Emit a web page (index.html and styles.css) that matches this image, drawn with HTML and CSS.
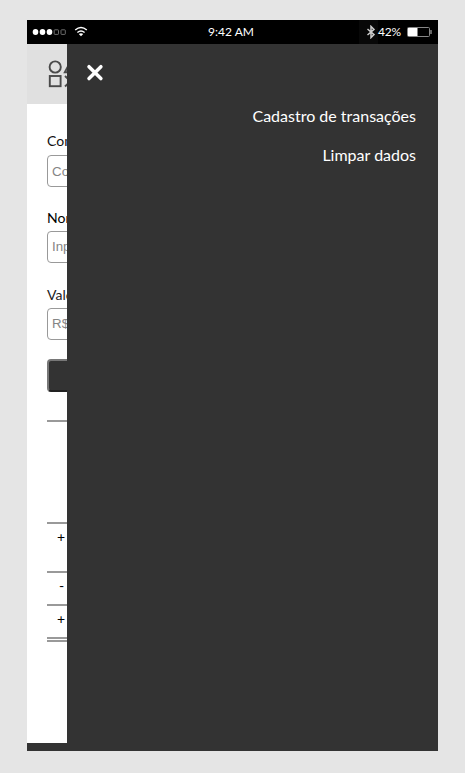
FILE: index.html
```html
<!DOCTYPE html>
<html lang="pt-BR">
<head>
<meta charset="utf-8">
<title>Cadastro de transações</title>
<link rel="stylesheet" href="styles.css">
</head>
<body>
<div class="phone">
  <div class="status">
    <div class="status-left">
      <svg class="signal" width="36" height="8" viewBox="0 0 36 8"><g fill="#fff"><ellipse cx="3.5" cy="4" rx="2.8" ry="3"/><ellipse cx="10.5" cy="4" rx="2.8" ry="3"/><ellipse cx="17.5" cy="4" rx="2.8" ry="3"/></g><g fill="none" stroke="#777" stroke-width=".9"><rect x="22.2" y="1.8" width="4.3" height="4.6" rx=".6"/><rect x="29" y="1.8" width="4.3" height="4.6" rx=".6"/></g></svg>
      <svg class="wifi" width="14" height="11" viewBox="0 0 14 11"><g fill="none" stroke="#fff" stroke-width="1.4"><path d="M1.2 4Q7-1.2 12.8 4"/><path d="M3.4 6.5Q7 3.3 10.6 6.5"/></g><path d="M4.8 8.1Q7 6.4 9.2 8.1L7 10.3Z" fill="#fff"/></svg>
    </div>
    <span class="clock">9:42 AM</span>
    <div class="status-right">
      <span class="bt"><svg width="10" height="14" viewBox="0 0 10 14"><path d="M1.5 4L8 9.6L5 12.6V1.4L8 4.4L1.5 10" fill="none" stroke="#ccc" stroke-width="1.5"/></svg></span>
      <span class="percent">42%</span>
      <svg class="battery" width="25" height="10" viewBox="0 0 25 10"><rect x=".5" y=".5" width="22" height="9" rx="1" fill="none" stroke="#888"/><rect x="1" y="1" width="9.500" height="8" fill="#fff"/><path d="M24 3v4" stroke="#aaa" stroke-width="1.2"/></svg>
    </div>
  </div>
  <div class="screen">
    <header class="header">
      <svg width="36" height="28" viewBox="0 0 36 28"><g fill="none" stroke="#4a4a4a" stroke-width="1.9"><circle cx="7.2" cy="7" r="5.6"/><rect x="1.8" y="16" width="10.8" height="10.2"/><path d="M22.500 1.500L28.500 12.200H16.800Z"/><path d="M17 16L28 26.500M28 16L17 26.500"/></g></svg>
    </header>
    <main class="content">
      <label class="label">Com</label>
      <div class="field field-select">Co</div>
      <label class="label label-name">Nom</label>
      <div class="field">Inp</div>
      <label class="label label-value">Valo</label>
      <div class="field">R$</div>
      <div class="submit"></div>
      <div class="statement">
        <div class="row row-head"></div>
        <div class="row row-first">+</div>
        <div class="row">-</div>
        <div class="row">+</div>
        <div class="total"></div>
      </div>
    </main>
    <footer class="footer"></footer>
    <nav class="drawer">
      <svg class="close" width="18" height="18" viewBox="0 0 18 18"><path d="M3 2.700L14.900 14.600M14.900 2.700L3 14.600" stroke="#fff" stroke-width="3.500" stroke-linecap="round"/></svg>
      <a class="link">Cadastro de transações</a>
      <a class="link">Limpar dados</a>
    </nav>
  </div>
</div>
</body>
</html>
```

FILE: styles.css
```css
* { box-sizing: border-box; }
body {
  margin: 0;
  height: 773px;
  padding: 20px 27px 22px;
  background: #e5e5e5;
  font-family: Lato, sans-serif;
  overflow: hidden;
}
.phone { width: 411px; height: 731px; background: #fff; display: flex; flex-direction: column; }
.status {
  height: 24px;
  background: #000;
  color: #fff;
  display: grid;
  grid-template-columns: 1fr auto 1fr;
  align-items: center;
  font-size: 12px;
  line-height: 24px;
}
.status-left { display: flex; align-items: center; padding-left: 5px; }
.wifi { margin-left: 6px; margin-top: -2px; }
.clock { margin-right: 3px; }
.status-right { display: flex; align-items: center; justify-content: flex-end; padding-right: 6px; }
.bt { width: 19px; height: 24px; background: #080808; display: flex; align-items: center; justify-content: flex-end; padding-right: 2px; }
.percent { margin-right: 6px; letter-spacing: -0.2px; }
.screen { position: relative; flex: 1; display: flex; flex-direction: column; overflow: hidden; }
.header { height: 60px; background: #e0e0e0; padding: 16px 0 0 21px; }
.content { flex: 1; padding: 29px 20px 0; font-size: 14px; color: #111; }
.label { display: block; height: 16px; line-height: 16px; margin-bottom: 6px; }
.label-name, .label-value { color: #000; margin-top: 23px; margin-bottom: 5px; }
.label-value { margin-top: 24px; color: #222; }
.field {
  height: 32px;
  border: 1px solid #999;
  border-radius: 4px;
  padding-left: 4px;
  line-height: 29px;
  color: #858585;
  font-family: "Liberation Sans", Arial, sans-serif;
  font-size: 13.33px;
}
.field-select { line-height: 31px; }
.submit { height: 33px; margin-top: 19px; background: #333; border: 2px solid #777; border-bottom-color: #222; border-radius: 4px; }
.statement { margin-top: 28px; border-top: 2px solid #999; }
.row { height: 33px; border-bottom: 2px solid #999; padding-left: 10px; line-height: 26px; color: #000; }
.row:nth-child(3) { padding-left: 12px; }
.row-head { height: 102px; }
.row-first { height: 49px; }
.total { height: 3px; border-bottom: 2px solid #999; }
.footer { height: 8px; background: #333; }
.drawer {
  position: absolute;
  top: 0;
  right: 0;
  bottom: 0;
  width: 371px;
  background: #333;
  padding: 20px 22px 0 19px;
  display: flex;
  flex-direction: column;
}
.close { margin-bottom: 24px; }
.link { color: #fff; font-size: 16px; line-height: 20px; margin-bottom: 19px; text-align: right; }
```
